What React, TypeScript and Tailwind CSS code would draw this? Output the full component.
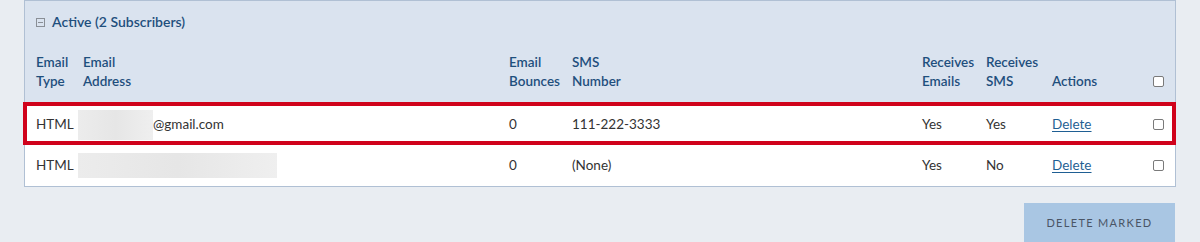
const COLS = "grid grid-cols-[47px_426px_63px_350px_64px_66px_101px_11px] items-center pl-[11px]";

type Subscriber = {
  type: string;
  maskWidth: number;
  domain?: string;
  bounces: number;
  sms: string;
  emails: string;
  texts: string;
  marked?: boolean;
};

const SUBSCRIBERS: Subscriber[] = [
  { type: "HTML", maskWidth: 75, domain: "@gmail.com", bounces: 0, sms: "111-222-3333", emails: "Yes", texts: "Yes", marked: true },
  { type: "HTML", maskWidth: 199, bounces: 0, sms: "(None)", emails: "Yes", texts: "No" },
];

function Box() {
  return <span className="block h-[11px] w-[11px] rounded-[2px] border border-[#7a7a7a] bg-white" />;
}

function Row({ s }: { s: Subscriber }) {
  return (
    <div className={`relative h-[41px] bg-white text-[13.5px] text-[#333] ${COLS}`}>
      <span>{s.type}</span>
      <span className="flex items-center">
        <span
          className="-ml-[5px] block bg-gradient-to-r from-[#ececec] via-[#e6e6e6] to-[#efefef]"
          style={{ width: s.maskWidth, height: s.domain ? 30 : 25 }}
        />
        {s.domain && <span>{s.domain}</span>}
      </span>
      <span>{s.bounces}</span>
      <span>{s.sms}</span>
      <span>{s.emails}</span>
      <span>{s.texts}</span>
      <a href="#" className="text-[#1f5f93] underline underline-offset-2">
        Delete
      </a>
      <Box />
      {s.marked && (
        <span className="pointer-events-none absolute -top-[2px] -left-[2px] -right-[1px] bottom-0 border-4 border-[#d0021b]" />
      )}
    </div>
  );
}

export default function App() {
  return (
    <div className="h-[242px] overflow-hidden bg-[#e9edf2] font-['Lato',sans-serif]">
      <div className="ml-[24px] w-[1152px] border border-[#b0c0d4] bg-[#dae3ef]">
        <div className="flex items-center gap-[7px] pl-[11px] pt-[11px] text-[14px] font-semibold leading-[20px] text-[#1f4f7d]">
          <span className="flex h-[9px] w-[9px] items-center justify-center border border-[#8a8f96]">
            <span className="h-px w-[5px] bg-[#8a8f96]" />
          </span>
          Active (2 Subscribers)
        </div>
        <div className={`mt-[21px] pb-[13px] text-[13.5px] font-semibold leading-[19px] text-[#1f4f7d] ${COLS} items-end`}>
          <span>Email<br />Type</span>
          <span>Email<br />Address</span>
          <span>Email<br />Bounces</span>
          <span>SMS<br />Number</span>
          <span>Receives<br />Emails</span>
          <span>Receives<br />SMS</span>
          <span>Actions</span>
          <span className="mb-[4px]"><Box /></span>
        </div>
        {SUBSCRIBERS.map((s, i) => (
          <Row key={i} s={s} />
        ))}
      </div>
      <div className="mt-[16px] flex justify-end pr-[25px]">
        <button className="h-[40px] w-[151px] bg-[#a9c6e3] text-[11px] tracking-[0.12em] text-[#4a5566]">
          DELETE MARKED
        </button>
      </div>
    </div>
  );
}
